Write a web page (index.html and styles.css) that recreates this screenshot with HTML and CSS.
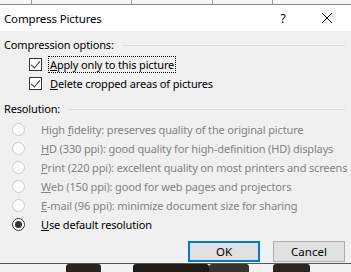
FILE: index.html
```html
<!DOCTYPE html>
<html lang="en">
<head>
    <meta charset="utf-8">
    <title>Compress Pictures</title>
    <link rel="stylesheet" href="styles.css">
</head>
<body>
    <div class="backdrop-top">
        <div class="cell c1"></div>
        <div class="cell c2"></div>
        <div class="cell c3"></div>
        <div class="cell c4"></div>
        <div class="cell c5"></div>
    </div>

    <div class="dialog">
        <div class="titlebar">
            <span class="title">Compress Pictures</span>
            <span class="help">?</span>
            <span class="close">
                <svg width="12" height="12" viewBox="0 0 12 12"><path d="M1 1 L11 11 M11 1 L1 11" stroke="#000" stroke-width="1"/></svg>
            </span>
        </div>

        <div class="content">
            <div class="group-head"><span>Compression options:</span><div class="rule"></div></div>
            <div class="check-row">
                <span class="checkbox checked"></span>
                <span class="label focused"><u>A</u>pply only to this picture</span>
            </div>
            <div class="check-row">
                <span class="checkbox checked"></span>
                <span class="label"><u>D</u>elete cropped areas of pictures</span>
            </div>

            <div class="group-head res"><span>Resolution:</span><div class="rule"></div></div>
            <div class="radio-row disabled"><span class="radio"></span><span class="label">High <u>f</u>idelity: preserves quality of the original picture</span></div>
            <div class="radio-row disabled"><span class="radio"></span><span class="label"><u>H</u>D (330 ppi): good quality for high-definition (HD) displays</span></div>
            <div class="radio-row disabled"><span class="radio"></span><span class="label"><u>P</u>rint (220 ppi): excellent quality on most printers and screens</span></div>
            <div class="radio-row disabled"><span class="radio"></span><span class="label"><u>W</u>eb (150 ppi): good for web pages and projectors</span></div>
            <div class="radio-row disabled"><span class="radio"></span><span class="label"><u>E</u>-mail (96 ppi): minimize document size for sharing</span></div>
            <div class="radio-row"><span class="radio on"></span><span class="label"><u>U</u>se default resolution</span></div>

            <div class="buttons">
                <button class="btn primary">OK</button>
                <button class="btn">Cancel</button>
            </div>
        </div>
    </div>

    <div class="photo">
        <div class="blob b1"></div>
        <div class="blob b2"></div>
        <div class="blob b3"></div>
        <div class="blob b4"></div>
    </div>
</body>
</html>
```

FILE: styles.css
```css
* {
    box-sizing: border-box;
}

body {
    margin: 0;
    width: 351px;
    height: 272px;
    overflow: hidden;
    font-family: 'Noto Sans', 'Open Sans', sans-serif;
    font-size: 11px;
    letter-spacing: -0.15px;
    color: #000;
    background: #fff;
}

.backdrop-top {
    display: flex;
    height: 5px;
    border-bottom: 1px solid #8a8a8a;
    background: #f6f6f6;
}

.cell {
    height: 100%;
    border-right: 1px solid #9a9a9a;
}

.c1 { width: 32px; }
.c2 { width: 100px; }
.c3 { width: 81px; }
.c4 { width: 60px; }
.c5 { flex: 1; border-right: none; }

.dialog {
    background: #f0f0f0;
    border-bottom: 1px solid #555;
}

.titlebar {
    display: flex;
    align-items: center;
    height: 26px;
    background: #fff;
    padding-left: 4px;
}

.title {
    flex: 1;
    font-size: 11.5px;
}

.help {
    width: 20px;
    font-size: 12px;
    margin-right: 24px;
    text-align: center;
}

.close {
    width: 20px;
    margin-right: 14px;
    display: flex;
    justify-content: center;
}

.content {
    padding: 6px 6px 0 4px;
}

.group-head {
    display: flex;
    align-items: center;
    height: 16px;
    line-height: 16px;
    white-space: nowrap;
}

.group-head .rule {
    flex: 1;
    height: 1px;
    margin-left: 8px;
    background: #dcdcdc;
}

.group-head.res {
    margin-top: 8px;
    margin-bottom: 3px;
}

.check-row {
    display: flex;
    align-items: center;
    height: 19px;
    padding-left: 25px;
    white-space: nowrap;
}

.group-head + .check-row {
    margin-top: 2px;
}

.checkbox {
    width: 13px;
    height: 13px;
    border: 1px solid #333;
    background: #fff;
    position: relative;
    margin-right: 8px;
    flex: none;
}

.checkbox.checked::after {
    content: "";
    position: absolute;
    left: 3px;
    top: 0px;
    width: 4px;
    height: 8px;
    border-right: 1px solid #333;
    border-bottom: 1px solid #333;
    transform: rotate(40deg);
}

.label.focused {
    outline: 1px dotted #000;
    outline-offset: 0;
    padding: 0 1px;
    margin-left: -1px;
}

.radio-row {
    display: flex;
    align-items: center;
    height: 19px;
    padding-left: 8px;
    white-space: nowrap;
}

.radio {
    width: 13px;
    height: 13px;
    border: 1px solid #333;
    border-radius: 50%;
    background: #fff;
    margin-right: 16px;
    position: relative;
    flex: none;
}

.radio-row.disabled .radio {
    border-color: #cccccc;
    background: #fcfcfc;
}

.radio-row.disabled .label {
    color: #838383;
}

.radio.on::after {
    content: "";
    position: absolute;
    left: 2px;
    top: 2px;
    width: 7px;
    height: 7px;
    border-radius: 50%;
    background: #333;
}

.buttons {
    display: flex;
    justify-content: flex-end;
    gap: 13px;
    margin-top: 7px;
    padding-bottom: 1px;
}

.btn {
    width: 72px;
    height: 21px;
    font-family: inherit;
    font-size: 11.5px;
    background: #e1e1e1;
    border: 1px solid #adadad;
    color: #000;
    padding: 0;
}

.btn.primary {
    border: 2px solid #0078d7;
}

.photo {
    display: flex;
    height: 10px;
    background: #f2f2f2;
}

.blob {
    height: 100%;
    background: #1e1a18;
    border-radius: 3px 3px 0 0;
}

.b1 { width: 35px; margin-left: 66px; background: #2a2420; }
.b2 { width: 76px; margin-left: 32px; }
.b3 { width: 40px; background: #3a342f; }
.b4 { width: 37px; margin-left: 24px; background: #2b2522; }
```
